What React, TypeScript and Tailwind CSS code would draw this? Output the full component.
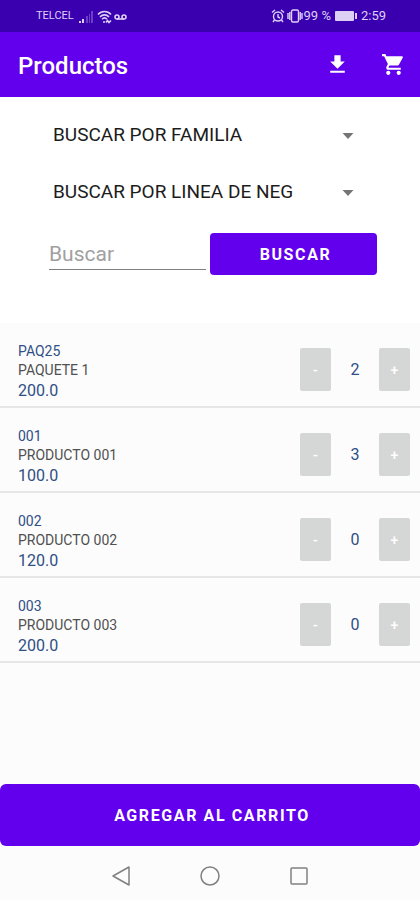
import React, { useState } from 'react';

interface Product {
  code: string;
  name: string;
  price: string;
  quantity: number;
}

const initialProducts: Product[] = [
  { code: 'PAQ25', name: 'PAQUETE 1', price: '200.0', quantity: 2 },
  { code: '001', name: 'PRODUCTO 001', price: '100.0', quantity: 3 },
  { code: '002', name: 'PRODUCTO 002', price: '120.0', quantity: 0 },
  { code: '003', name: 'PRODUCTO 003', price: '200.0', quantity: 0 },
];

const StatusBar: React.FC = () => (
  <div className="flex h-8 items-center justify-between bg-[#3a00b0] pl-9 pr-[34px] text-[13px] text-[#ddd0f5]">
    <div className="flex items-center pt-px">
      <span className="w-[43px] text-[11px]">TELCEL</span>
      <svg className="h-3 w-[15px]" viewBox="0 0 15 12" fill="currentColor">
        <path d="M0 10h2v2H0zM3 8h2v4H3z" />
        <path d="M7 5h2v7H7zM10 3h1v9h-1zM12 0h2v12h-2z" opacity="0.3" />
      </svg>
      <svg className="ml-[3px] h-[14px] w-[15px]" viewBox="0 0 15 14" fill="none" stroke="currentColor" strokeWidth="1.6">
        <path d="M1 4.5C4.5 .5 10.5 .5 14 4.5M3 7c2.5-2.8 6.5-2.8 9 0M5 9.2c1.5-1.5 3.5-1.5 5 0" />
        <path d="M6 12h2M9 12.5l1.5-2 1.5 2 2-2" />
      </svg>
      <svg className="ml-[2px] h-[14px] w-[13px]" viewBox="0 0 13 14" fill="none" stroke="currentColor" strokeWidth="1.6">
        <circle cx="3" cy="7" r="2" />
        <circle cx="10" cy="7" r="2" />
        <path d="M3 9h7" />
      </svg>
    </div>
    <div className="flex items-center">
      <svg className="h-[14px] w-[14px]" viewBox="0 0 14 14" fill="none" stroke="currentColor" strokeWidth="1.4">
        <circle cx="7" cy="7.5" r="4.5" />
        <path d="M1 3.5L4 1M13 3.5L10 1M7 5v3l2 1M3.5 11L2 13M10.5 11l1.5 2" />
      </svg>
      <svg className="ml-[2px] h-[14px] w-4" viewBox="0 0 16 14" fill="none" stroke="currentColor" strokeWidth="1.4">
        <rect x="4.5" y="1" width="7" height="12" rx="1.5" />
        <path d="M1 4v6M2.8 3v8M13.2 3v8M15 4v6" />
      </svg>
      <span className="ml-px">99 %</span>
      <svg className="ml-1 h-[10px] w-[22px]" viewBox="0 0 22 10" fill="currentColor">
        <rect width="19" height="10" rx="1" />
        <path d="M20 2h2v6h-2z" />
      </svg>
      <span className="ml-1">2:59</span>
    </div>
  </div>
);

const Toolbar: React.FC = () => (
  <header className="flex h-[65px] items-center bg-[#6200ee] pl-[18px] pr-[14px] text-white">
    <h1 className="flex-1 pt-[2px] text-[24px] font-medium">Productos</h1>
    <button type="button" aria-label="Descargar" className="mr-[31px]">
      <svg className="h-[25px] w-[25px]" viewBox="0 0 24 24" fill="currentColor">
        <path d="M19 9h-4V3H9v6H5l7 7 7-7zM5 18v2h14v-2H5z" />
      </svg>
    </button>
    <button type="button" aria-label="Carrito">
      <svg className="h-[25px] w-[25px]" viewBox="0 0 24 24" fill="currentColor">
        <path d="M7 18c-1.1 0-1.99.9-1.99 2S5.9 22 7 22s2-.9 2-2-.9-2-2-2zM1 2v2h2l3.6 7.59-1.35 2.45c-.16.28-.25.61-.25.96 0 1.1.9 2 2 2h12v-2H7.42c-.14 0-.25-.11-.25-.25l.03-.12.9-1.63h7.45c.75 0 1.41-.41 1.75-1.03l3.58-6.49A1 1 0 0 0 20 4H5.21l-.94-2H1zm16 16c-1.1 0-1.99.9-1.99 2s.89 2 1.99 2 2-.9 2-2-.9-2-2-2z" />
      </svg>
    </button>
  </header>
);

const FilterSelect: React.FC<{ label: string }> = ({ label }) => (
  <div className="flex h-[57px] items-center">
    <select aria-label={label} className="min-w-0 flex-1 appearance-none bg-transparent text-[19px] text-[#1c1c1c] outline-none">
      <option>{label}</option>
    </select>
    <svg className="h-[6px] w-3" viewBox="0 0 12 6" fill="#757575">
      <path d="M.5 0h11L6 6z" />
    </svg>
  </div>
);

interface ProductRowProps {
  product: Product;
  onChange: (quantity: number) => void;
}

const ProductRow: React.FC<ProductRowProps> = ({ product, onChange }) => {
  const stepClass = 'h-[43px] w-[31px] rounded-xs bg-[#d5d7d6] text-sm font-medium text-white';

  return (
    <li className="flex h-[85px] items-center border-b-2 border-[#e6e6e6] pl-[18px] pr-[10px] pt-[10px]">
      <div className="flex-1 pt-1 text-[#2f4f85]">
        <p className="text-sm leading-[19px]">{product.code}</p>
        <p className="text-sm leading-[19px] text-[#505050]">{product.name}</p>
        <p className="text-base leading-[22px]">{product.price}</p>
      </div>
      <button type="button" aria-label={`Quitar ${product.name}`} className={stepClass} onClick={() => onChange(Math.max(0, product.quantity - 1))}>
        -
      </button>
      <span className="w-12 text-center text-base text-[#2f4f85]">{product.quantity}</span>
      <button type="button" aria-label={`Sumar ${product.name}`} className={stepClass} onClick={() => onChange(product.quantity + 1)}>
        +
      </button>
    </li>
  );
};

const NavigationBar: React.FC = () => (
  <nav className="flex h-[54px] items-center justify-center gap-[69px] pt-[6px] text-[#808080]">
    <button type="button" aria-label="Atrás">
      <svg className="h-5 w-5" viewBox="0 0 20 20" fill="none" stroke="currentColor" strokeWidth="1.5" strokeLinejoin="round">
        <path d="M18 1v18L2 10z" />
      </svg>
    </button>
    <button type="button" aria-label="Inicio">
      <svg className="h-5 w-5" viewBox="0 0 20 20" fill="none" stroke="currentColor" strokeWidth="1.5">
        <circle cx="10" cy="10" r="9" />
      </svg>
    </button>
    <button type="button" aria-label="Recientes">
      <svg className="h-5 w-5" viewBox="0 0 20 20" fill="none" stroke="currentColor" strokeWidth="1.5">
        <rect x="2" y="2" width="16" height="16" rx="1" />
      </svg>
    </button>
  </nav>
);

export default function App() {
  const [products, setProducts] = useState(initialProducts);

  const setQuantity = (code: string, quantity: number) => {
    setProducts((items) => items.map((item) => (item.code === code ? { ...item, quantity } : item)));
  };

  return (
    <div className="flex min-h-screen flex-col bg-[#fcfcfc] font-['Roboto',sans-serif]">
      <StatusBar />
      <Toolbar />
      <main className="flex flex-1 flex-col">
        <section className="bg-white pb-12 pt-[10px]">
          <div className="pl-[53px] pr-[66px]">
            <FilterSelect label="BUSCAR POR FAMILIA" />
            <FilterSelect label="BUSCAR POR LINEA DE NEG" />
          </div>
          <form className="flex items-center gap-1 pl-[49px] pr-[43px] pt-3" onSubmit={(e) => e.preventDefault()}>
            <input
              type="text"
              aria-label="Buscar"
              placeholder="Buscar"
              className="h-8 min-w-0 flex-1 border-b border-[#808080] bg-transparent text-[21px] text-[#1c1c1c] outline-none placeholder:text-[#a0a0a0]"
            />
            <button type="submit" className="h-[42px] w-[167px] rounded bg-[#6200ee] pl-1 pt-[2px] text-base font-bold tracking-widest text-white">
              BUSCAR
            </button>
          </form>
        </section>
        <ul className="flex-1">
          {products.map((product) => (
            <ProductRow key={product.code} product={product} onChange={(quantity) => setQuantity(product.code, quantity)} />
          ))}
        </ul>
        <button type="button" className="h-[62px] rounded-md bg-[#6200ee] pl-1 pt-[2px] text-base font-bold tracking-widest text-white">
          AGREGAR AL CARRITO
        </button>
      </main>
      <NavigationBar />
    </div>
  );
}
